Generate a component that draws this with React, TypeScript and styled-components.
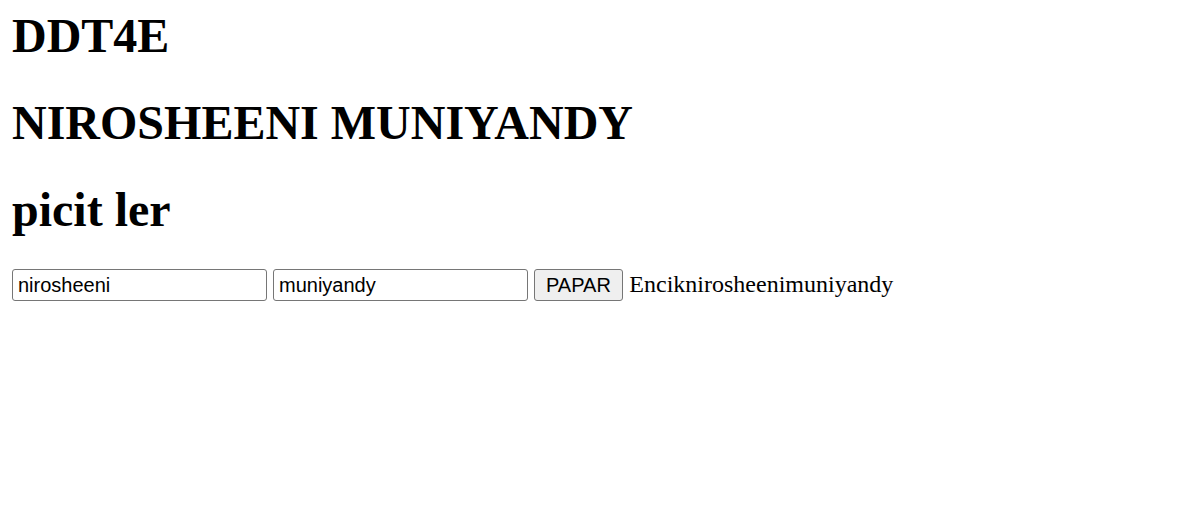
import React from "react";
import styled, { createGlobalStyle } from "styled-components";

const GlobalStyle = createGlobalStyle`
  html, body {
    margin: 0;
    padding: 0;
    background: #ffffff;
    color: #000000;
    font-family: "Liberation Serif", "Times New Roman", serif;
  }
`;

const Page = styled.main`
  padding: 8px 12px;
  display: flex;
  flex-direction: column;
  align-items: flex-start;
`;

const Heading = styled.h1`
  margin: 0 0 32px;
  font-family: "Liberation Serif", "Times New Roman", serif;
  font-weight: 700;
  font-size: 48px;
  line-height: 55px;
  white-space: nowrap;
`;

const Row = styled.div`
  display: flex;
  align-items: baseline;
  gap: 6.5px;
  font-family: "Liberation Serif", "Times New Roman", serif;
  font-size: 24px;
`;

const TextInput = styled.input`
  box-sizing: border-box;
  width: 254.5px;
  height: 32px;
  margin: 0;
  padding: 0 5px;
  border: 1px solid #767676;
  border-radius: 3px;
  background: #ffffff;
  color: #000000;
  font-family: "Liberation Sans", Arial, sans-serif;
  font-size: 20px;
  outline: none;
`;

const Button = styled.button`
  box-sizing: border-box;
  height: 32px;
  margin: 0;
  padding: 0 11px;
  border: 1px solid #767676;
  border-radius: 3px;
  background: #efefef;
  color: #000000;
  font-family: "Liberation Sans", Arial, sans-serif;
  font-size: 20px;
  cursor: pointer;
`;

const Output = styled.span`
  font-family: "Liberation Serif", "Times New Roman", serif;
  font-size: 24px;
  white-space: nowrap;
`;

export default function App() {
  const [first, setFirst] = React.useState("nirosheeni");
  const [last, setLast] = React.useState("muniyandy");
  const [result, setResult] = React.useState("Encik" + "nirosheeni" + "muniyandy");

  return (
    <>
      <GlobalStyle />
      <Page>
        <Heading>DDT4E</Heading>
        <Heading>NIROSHEENI MUNIYANDY</Heading>
        <Heading>picit ler</Heading>
        <Row>
          <TextInput value={first} onChange={(e) => setFirst(e.target.value)} />
          <TextInput value={last} onChange={(e) => setLast(e.target.value)} />
          <Button onClick={() => setResult("Encik" + first + last)}>PAPAR</Button>
          <Output>{result}</Output>
        </Row>
      </Page>
    </>
  );
}
